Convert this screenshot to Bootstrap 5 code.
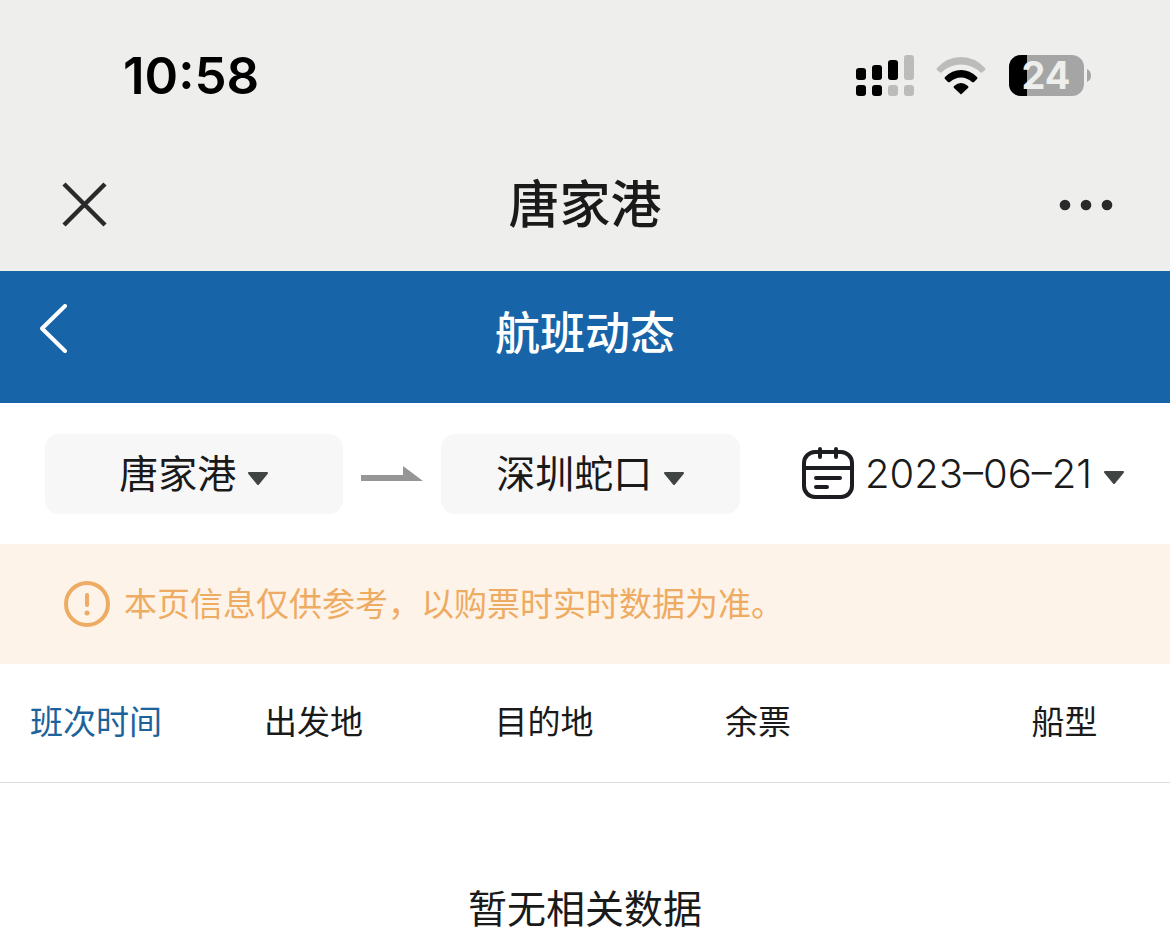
<!DOCTYPE html>
<html lang="zh-CN">
<head>
<meta charset="utf-8">
<meta name="viewport" content="width=device-width, initial-scale=1">
<title>唐家港</title>
<link href="https://cdn.jsdelivr.net/npm/bootstrap@5.3.0/dist/css/bootstrap.min.css" rel="stylesheet">
<style>
  body { font-family: Inter, "Noto Sans CJK SC", sans-serif; color: #1a1a1a; background: #fff; }
  svg { display: block; flex: none; }
  .plain { appearance: none; border: 0; background: none; padding: 0; color: inherit; }
  .chrome { background: #eeeeec; }
  .status { height: 140px; padding: 12px 78px 0 123px; }
  .clock { font-size: 51px; font-weight: 600; line-height: 60px; color: #000; }
  .signals { gap: 22px; }
  .split { display: grid; grid-template-columns: 1fr auto 1fr; align-items: center; }
  .app-title { height: 131px; padding: 0 56px 2px; }
  .app-title h1 { font-size: 51px; font-weight: 500; line-height: 64px; }
  .page-title { height: 132px; padding: 0 40px 6px; background: #1864a8; color: #fff; }
  .page-title h2 { font-size: 45px; font-weight: 500; line-height: 56px; }
  .filters { height: 141px; padding: 0 45px; gap: 18px; }
  .station { flex: 1 1 0; height: 80px; border-radius: 14px; background: #f7f7f7; }
  .picker { font-size: 39px; line-height: 56px; }
  .picker select { padding-right: 32px; background: url("data:image/svg+xml,%3Csvg xmlns='http://www.w3.org/2000/svg' width='22' height='14'%3E%3Cpath d='M2 1h18l-9 11z' fill='%23404443' stroke='%23404443' stroke-width='2' stroke-linejoin='round'/%3E%3C/svg%3E") right 62% no-repeat; }
  .date { margin-left: 44px; gap: 11px; font-size: 40px; font-weight: 300; }
  .notice { height: 120px; padding: 0 64px; gap: 14px; background: #fef3e9; color: #eeab62; font-size: 33px; line-height: 48px; }
  .flights { table-layout: fixed; font-size: 33px; line-height: 48px; }
  .flights th { height: 118px; padding: 0 0 2px 30px; font-weight: 400; border-bottom: 1px solid #dedede; }
  .flights .sorted { color: #1d639b; }
  .flights td { padding: 98px 0 0; font-size: 39px; line-height: 56px; }
  .w-time { width: 20%; } .w-place { width: 19.7%; } .w-left { width: 26.2%; } .w-ship { width: 14.4%; }
</style>
</head>
<body>
<header class="chrome">
  <div class="status d-flex align-items-center justify-content-between">
    <div class="clock">10:58</div>
    <div class="signals d-flex align-items-center">
      <svg width="60" height="44" viewBox="0 0 60 44" role="img" aria-label="信号">
        <g fill="#000"><rect x="2" y="14" width="10" height="12" rx="3"/><rect x="18" y="11" width="10" height="15" rx="3"/><rect x="34" y="6" width="10" height="20" rx="3"/><rect x="2" y="31" width="10" height="11" rx="3"/><rect x="18" y="31" width="10" height="11" rx="3"/></g>
        <g fill="#bcbcbb"><rect x="50" y="1" width="10" height="25" rx="3"/><rect x="34" y="31" width="10" height="11" rx="3"/><rect x="50" y="31" width="10" height="11" rx="3"/></g>
      </svg>
      <svg width="50" height="44" viewBox="0 0 50 44" role="img" aria-label="无线网络">
        <path d="M1 14Q11 3 25 3T49 14Q50 15 49 16L46 18.500Q45 19 44 18Q36 10.500 25 10.500T6 18Q5 19 4 18.500L1 16Q0 15 1 14Z" fill="#bcbcbb"/>
        <path d="M9 23Q16 16 25 16T41 23Q42 24 41 25L38 28Q37 28.500 36 28Q31 23.500 25 23.500T14 28Q13 28.500 12 28L9 25Q8 24 9 23Z"/>
        <path d="M18 32Q25 26 32 32Q33 33 32 34L25 40.500L18 34Q17 33 18 32Z"/>
      </svg>
      <svg width="84" height="56" viewBox="0 -6 84 56" role="img" aria-label="电量 24">
        <rect x="1" y="1" width="75" height="41" rx="12" fill="#a5a5a5"/>
        <path d="M19 1H13A12 12 0 0 0 1 13V30A12 12 0 0 0 13 42H19Z"/>
        <path d="M79 15Q83 17 83 21.500T79 28Z" fill="#a5a5a5"/>
        <text x="38" y="35" text-anchor="middle" font-family="Inter, sans-serif" font-size="38" font-weight="700" fill="#eeeeec">24</text>
      </svg>
    </div>
  </div>
  <div class="app-title split">
    <button class="plain" type="button" aria-label="关闭"><svg width="52" height="46" viewBox="0 0 52 46" stroke="#2a2a2a" stroke-width="4.500"><path d="M8 2L49 43M49 2L8 43"/></svg></button>
    <h1 class="m-0">唐家港</h1>
    <button class="plain d-flex justify-content-end" type="button" aria-label="更多"><svg width="56" height="12" viewBox="0 0 56 12" fill="#2a2a2a"><circle cx="7" cy="6" r="5.300"/><circle cx="28" cy="6" r="5.300"/><circle cx="49" cy="6" r="5.300"/></svg></button>
  </div>
</header>
<main>
  <div class="page-title split">
    <a href="#" class="text-white" aria-label="返回"><svg width="28" height="60" viewBox="0 0 28 60" fill="none" stroke="#fff" stroke-width="4" stroke-linecap="round" stroke-linejoin="round"><path d="M25 2L2 24.500L25 47"/></svg></a>
    <h2 class="m-0">航班动态</h2>
  </div>
  <form class="filters d-flex align-items-center">
    <div class="station picker d-flex align-items-center justify-content-center">
      <select class="plain" aria-label="出发港"><option>唐家港</option></select>
    </div>
    <svg width="62" height="16" viewBox="0 0 62 16" fill="#969696"><path d="M0 9H42V0L62 15H0Z"/></svg>
    <div class="station picker d-flex align-items-center justify-content-center">
      <select class="plain" aria-label="到达港"><option>深圳蛇口</option></select>
    </div>
    <button class="plain picker date d-flex align-items-center" type="button">
      <svg width="52" height="54" viewBox="0 0 52 54" fill="none" stroke="#1c1d20" stroke-width="4"><rect x="2" y="5" width="48" height="45" rx="11"/><path d="M2 21H50"/><path d="M18 2V10M34 2V10M14 31H38M14 40H25" stroke-linecap="round"/></svg>
      <span>2023–06–21</span>
      <svg class="mt-2" width="22" height="14" viewBox="0 0 22 14"><path d="M2 1h18l-9 11z" fill="#404443" stroke="#404443" stroke-width="2" stroke-linejoin="round"/></svg>
    </button>
  </form>
  <div class="notice d-flex align-items-center">
    <svg width="46" height="46" viewBox="0 0 46 46"><circle cx="23" cy="23" r="21" fill="none" stroke="#eeab62" stroke-width="4"/><path d="M23 14V24" stroke="#eeab62" stroke-width="4" stroke-linecap="round"/><circle cx="23" cy="32" r="2.500" fill="#eeab62"/></svg>
    <span>本页信息仅供参考，以购票时实时数据为准。</span>
  </div>
  <table class="flights w-100">
    <thead><tr><th scope="col" class="w-time sorted">班次时间</th><th scope="col" class="w-place">出发地</th><th scope="col" class="w-place">目的地</th><th scope="col" class="w-left">余票</th><th scope="col" class="w-ship">船型</th></tr></thead>
    <tbody><tr><td colspan="5" class="text-center">暂无相关数据</td></tr></tbody>
  </table>
</main>
<script src="https://cdn.jsdelivr.net/npm/bootstrap@5.3.0/dist/js/bootstrap.bundle.min.js"></script>
</body>
</html>
